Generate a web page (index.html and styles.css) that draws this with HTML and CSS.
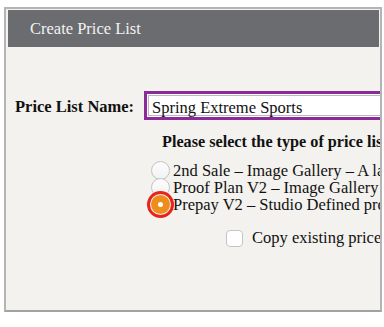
FILE: index.html
```html
<!DOCTYPE html>
<html lang="en">

<head>
    <meta charset="UTF-8">
    <meta name="viewport" content="width=device-width, initial-scale=1.0">
    <title>Create Price List</title>
    <link rel="stylesheet" href="styles.css">
</head>

<body>
    <div class="panel">
        <div class="panel-header">Create Price List</div>
        <div class="panel-body">
            <div class="name-row">
                <label class="name-label">Price List Name:</label>
                <div class="name-input">Spring Extreme Sports</div>
            </div>
            <div class="type-title">Please select the type of price list to create:</div>
            <div class="type-list">
                <div class="type-item">
                    <span class="radio"></span>
                    <span>2nd Sale – Image Gallery – A la carte products and packages</span>
                </div>
                <div class="type-item">
                    <span class="radio"></span>
                    <span>Proof Plan V2 – Image Gallery with proof plan pricing</span>
                </div>
                <div class="type-item">
                    <span class="radio checked"></span>
                    <span>Prepay V2 – Studio Defined products and packages</span>
                </div>
            </div>
            <div class="copy-row">
                <span class="checkbox"></span>
                <span>Copy existing price list</span>
            </div>
        </div>
    </div>
</body>

</html>
```

FILE: styles.css
```css
* {
    margin: 0;
    padding: 0;
    box-sizing: border-box;
}

body {
    background-color: #fff;
    font-family: "Liberation Serif", "Times New Roman", serif;
    color: #111;
}

.panel {
    margin: 7px 0 0 4px;
    width: 378px;
    height: 305px;
    border: 2px solid #b4b4b4;
    border-bottom-color: #a2a2a2;
    padding: 1px 1px 0 2px;
    background-color: #f3f2ee;
    overflow: hidden;
}

.panel-header {
    height: 37px;
    background-color: #6b6c70;
    color: #f2f2f2;
    font-size: 16.5px;
    line-height: 37px;
    padding-left: 22px;
    white-space: nowrap;
}

.panel-body {
    padding: 44px 0 0 7px;
    white-space: nowrap;
}

.name-row {
    display: flex;
    align-items: center;
}

.name-label {
    flex: none;
    width: 129px;
    padding-top: 3px;
    font-size: 16.5px;
    font-weight: bold;
}

.name-input {
    flex: none;
    width: 300px;
    height: 29px;
    border: 3px solid #8d2a99;
    background-color: #fff;
    font-size: 16.5px;
    line-height: 21px;
    padding: 3px 0 0 5px;
    box-shadow: inset 0 0 0 1px #fff, inset 0 0 0 2px #b9b9b9;
}

.type-title {
    margin: 12px 0 0 147px;
    font-size: 16.2px;
    font-weight: bold;
    line-height: 20px;
}

.type-list {
    margin: 10px 0 0 136px;
}

.type-item {
    display: flex;
    align-items: center;
    gap: 3px;
    height: 17px;
    font-size: 16.5px;
    line-height: 17px;
}

.radio {
    flex: none;
    position: relative;
    width: 19px;
    height: 19px;
    border-radius: 50%;
    border: 1px solid #c4c4c4;
    background: linear-gradient(#fdfdfd, #f2f2f2);
}

.radio.checked {
    border: none;
    background: #ec8d1c;
    box-shadow: 0 0 0 1px #f3f2ee, 0 0 0 4px #e8231b;
}

.radio.checked::after {
    content: "";
    position: absolute;
    left: 7px;
    top: 7px;
    width: 5px;
    height: 5px;
    border-radius: 50%;
    background-color: #fff;
}

.copy-row {
    display: flex;
    align-items: center;
    gap: 9px;
    margin: 15px 0 0 211px;
    font-size: 16.5px;
}

.checkbox {
    flex: none;
    width: 17px;
    height: 17px;
    border: 1px solid #c4c4c4;
    border-radius: 4px;
    background-color: #fff;
}
```
